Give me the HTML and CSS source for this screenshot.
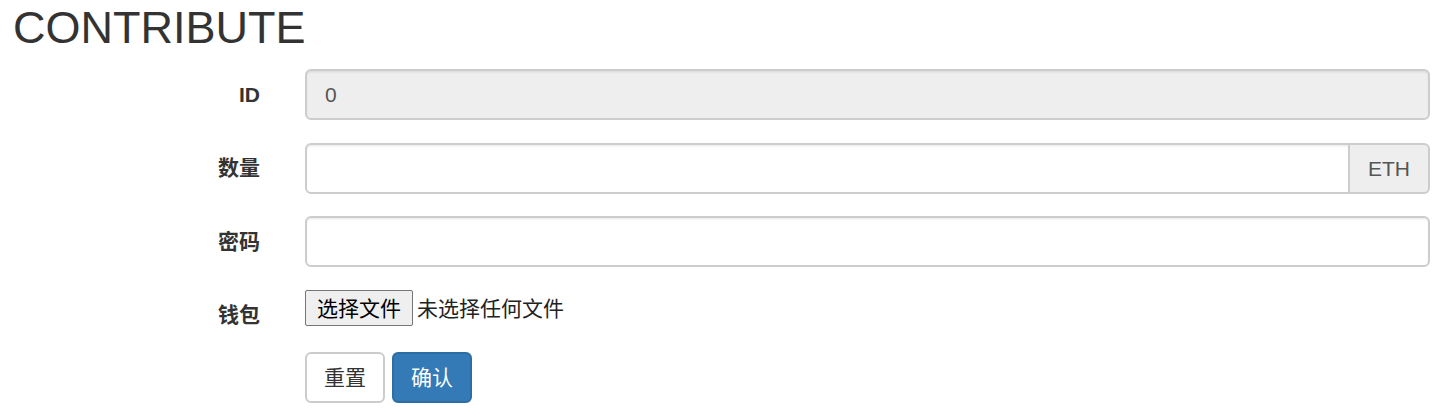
FILE: index.html
```html
<!DOCTYPE html>
<html lang="zh">
<head>
<meta charset="utf-8">
<title>Contribute</title>
<link rel="stylesheet" href="styles.css">
</head>
<body>
<h2 class="title">CONTRIBUTE</h2>
<form class="form">
  <div class="row">
    <label class="label">ID</label>
    <input class="control" type="text" value="0" disabled>
  </div>
  <div class="row">
    <label class="label">数量</label>
    <div class="group">
      <input class="control control-grouped" type="text">
      <span class="addon">ETH</span>
    </div>
  </div>
  <div class="row">
    <label class="label">密码</label>
    <input class="control" type="password">
  </div>
  <div class="row row-file">
    <label class="label">钱包</label>
    <div class="file">
      <span class="file-btn">选择文件</span>
      <span class="file-name">未选择任何文件</span>
    </div>
  </div>
  <div class="row row-actions">
    <span></span>
    <div class="actions">
      <button type="button" class="btn btn-default">重置</button>
      <button type="button" class="btn btn-primary">确认</button>
    </div>
  </div>
</form>
</body>
</html>
```
FILE: styles.css
```css
html, body {
  margin: 0;
  padding: 0;
  background: #fff;
}
body {
  font-family: "Liberation Sans", Arial, "Noto Sans CJK SC", sans-serif;
  color: #333;
  font-size: 21px;
  width: 1440px;
  height: 416px;
  overflow: hidden;
}
.title {
  margin: 3px 0 16.5px 13px;
  font-size: 45px;
  font-weight: 400;
  line-height: 49.5px;
  color: #333;
}
.form {
  display: flex;
  flex-direction: column;
  padding-right: 10px;
}
.row {
  display: grid;
  grid-template-columns: 305px 1fr;
  align-items: start;
  margin-bottom: 22.5px;
}
.label {
  text-align: right;
  padding: 10.5px 45px 0 0;
  font-weight: 700;
  font-size: 21px;
  line-height: 30px;
  color: #333;
}
.control {
  box-sizing: border-box;
  width: 100%;
  height: 51px;
  margin: 0;
  padding: 9px 18px;
  font-family: "Liberation Sans", Arial, "Noto Sans CJK SC", sans-serif;
  font-size: 21px;
  line-height: 30px;
  color: #555;
  background: #fff;
  border: 2px solid #cdcdcd;
  border-radius: 6px;
  box-shadow: inset 0 1.5px 1.5px rgba(0, 0, 0, 0.075);
  outline: none;
}
.control:disabled {
  background: #eee;
  color: #555;
  opacity: 1;
}
.group {
  display: flex;
}
.control-grouped {
  flex: 1;
  border-top-right-radius: 0;
  border-bottom-right-radius: 0;
}
.addon {
  box-sizing: border-box;
  height: 51px;
  padding: 9px 18px;
  line-height: 30px;
  font-size: 21px;
  color: #555;
  background: #eee;
  border: 2px solid #cdcdcd;
  border-left: 0;
  border-radius: 0 6px 6px 0;
}
.row-file {
  margin-bottom: 22px;
}
.file {
  display: flex;
  align-items: center;
  gap: 4px;
  font-family: "Noto Sans CJK SC", sans-serif;
  font-size: 21px;
}
.file-btn {
  box-sizing: border-box;
  width: 108px;
  height: 36px;
  display: flex;
  align-items: center;
  justify-content: center;
  background: #efefef;
  border: 1px solid #767676;
  border-radius: 2px;
  color: #000;
  line-height: 1;
}
.file-name {
  color: #222;
  line-height: 1;
}
.actions {
  display: flex;
  gap: 7px;
}
.btn {
  box-sizing: border-box;
  width: 80px;
  height: 51px;
  padding: 8px 0;
  font-family: "Liberation Sans", Arial, "Noto Sans CJK SC", sans-serif;
  font-size: 21px;
  line-height: 30px;
  text-align: center;
  border: 2px solid #ccc;
  border-radius: 6px;
  cursor: pointer;
}
.btn-default {
  background: #fff;
  color: #333;
}
.btn-primary {
  background: #337ab7;
  border-color: #2e6da4;
  color: #fff;
}
```
